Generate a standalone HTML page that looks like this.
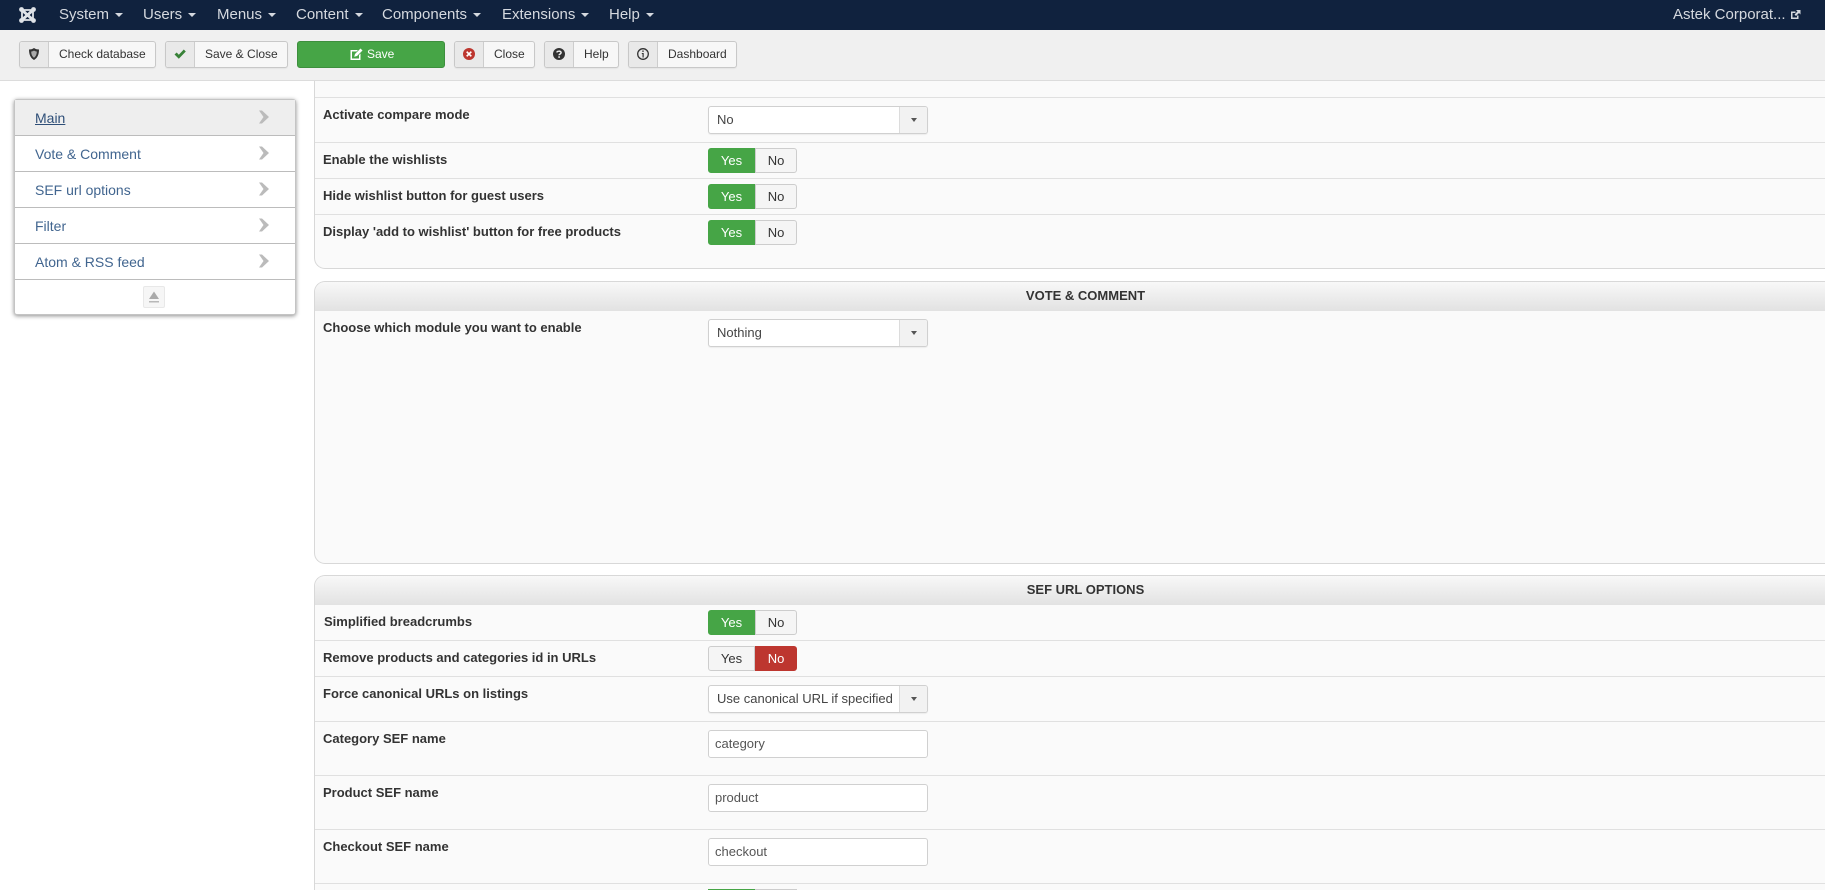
<!DOCTYPE html>
<html><head><meta charset="utf-8"><title>Options</title>
<style>
html,body{margin:0;padding:0;width:1825px;height:890px;overflow:hidden;background:#fff;font-family:"Liberation Sans",Arial,sans-serif;color:#333}
*{box-sizing:border-box}
#wrap{position:relative;width:1825px;height:890px;overflow:hidden;background:#fff}
.a{position:absolute}
#nav{left:0;top:0;width:1825px;height:30px;background:#10223e}
.m{position:absolute;top:5px;font-size:15px;line-height:20px;color:#d5d9df;white-space:nowrap}
.m i{display:inline-block;width:0;height:0;border-left:4px solid transparent;border-right:4px solid transparent;border-top:4px solid #d5d9df;margin-left:6px;vertical-align:2px}
#tb{left:0;top:30px;width:1825px;height:51px;background:#f0f0f0;border-bottom:1px solid #dcdcdc}
.b{position:absolute;top:41px;height:27px;background:#f7f7f7;border:1px solid #c8c8c8;border-radius:3px;font-size:12px;line-height:25px;color:#333;box-shadow:0 1px 1px rgba(0,0,0,.05)}
.b .ic{position:absolute;left:0;top:0;width:29px;height:25px;background:#e9e9e9;border-right:1px solid #cdcdcd;border-radius:2px 0 0 2px}
.b .ic svg{position:absolute;left:7px;top:5px}
.b span{position:absolute;left:39px;top:0;white-space:nowrap}
#sv{position:absolute;left:297px;top:41px;width:148px;height:27px;background:#46a546;border:1px solid #3d8f3d;border-radius:3px;color:#fff;font-size:12px;line-height:25px}
#side{left:14px;top:99px;width:282px;height:216px;background:#fff;border:1px solid #c4c4c4;border-radius:3px;box-shadow:0 1px 4px rgba(0,0,0,.45)}
.r{position:absolute;left:0;width:280px;height:36px;border-bottom:1px solid #bcbcbc;font-size:14px;line-height:37px;padding-left:20px;color:#41658f}
.r svg{position:absolute;left:243px;top:10px}
.box{position:absolute;left:314px;width:1511px;background:#fafafa;border:1px solid #d8d8d8;border-right:none;border-radius:11px 0 0 11px}
.hd{position:absolute;left:0;top:0;width:100%;height:29px;background:linear-gradient(#f8f8f8,#e2e2e2);border-radius:10px 0 0 0;text-align:center;font-size:13px;font-weight:bold;line-height:28px;color:#333;padding-left:31px}
.ln{position:absolute;left:315px;width:1510px;height:1px;background:#e0e0e0}
.l{position:absolute;left:323px;font-size:13px;font-weight:bold;line-height:18px;color:#333;white-space:nowrap}
.t{position:absolute;left:708px;width:89px;height:25px;font-size:13px;line-height:24px;text-align:center}
.t div{position:absolute;top:0;height:25px}
.t .y{left:0;width:47px;border-radius:3px 0 0 3px}
.t .n{left:47px;width:42px;border-radius:0 3px 3px 0}
.g{background:#46a546;color:#fff;border:1px solid #46a546}
.o{background:#f5f5f5;color:#333;border:1px solid #cdcdcd}
.d{background:#bd362f;color:#fff;border:1px solid #bd362f}
.s{position:absolute;left:708px;width:220px;height:28px;background:#fff;border:1px solid #d0d0d0;border-radius:3px;font-size:13px;line-height:25px;padding-left:8px;color:#444;white-space:nowrap;box-shadow:0 1px 1px rgba(0,0,0,.06)}
.s b{position:absolute;right:0;top:0;width:28px;height:26px;background:#f2f2f2;border-left:1px solid #dcdcdc;border-radius:0 2px 2px 0}
.s b:after{content:"";position:absolute;left:11px;top:11px;border-left:3px solid transparent;border-right:3px solid transparent;border-top:4px solid #555}
.i{position:absolute;left:708px;width:220px;height:28px;background:#fff;border:1px solid #d0d0d0;border-radius:3px;font-size:13px;line-height:25px;padding-left:6px;color:#555}
</style></head><body><div id="wrap">
<div class="a" id="nav"></div>
<svg class="a" style="left:18px;top:6px" width="19" height="18" viewBox="0 0 19 18"><g fill="none" stroke="#dfe3e8"><path d="M4 4 L15 14M15 4 L4 14" stroke-width="3"/><path d="M4 4 H15M4 14 H15M4 4 V14M15 4 V14" stroke-width="1.800"/></g><g fill="#10223e"><circle cx="9.500" cy="6" r=".9"/><circle cx="9.500" cy="12" r=".9"/><circle cx="6" cy="9" r=".9"/><circle cx="13" cy="9" r=".9"/></g><g fill="#dfe3e8"><circle cx="3.500" cy="3.500" r="2.400"/><circle cx="15.500" cy="3.500" r="2.400"/><circle cx="3.500" cy="14.500" r="2.400"/><circle cx="15.500" cy="14.500" r="2.400"/></g></svg>
<div class="m" style="left:59px">System<i></i></div>
<div class="m" style="left:143px">Users<i></i></div>
<div class="m" style="left:217px">Menus<i></i></div>
<div class="m" style="left:296px">Content<i></i></div>
<div class="m" style="left:382px">Components<i></i></div>
<div class="m" style="left:502px">Extensions<i></i></div>
<div class="m" style="left:609px">Help<i></i></div>
<div class="m" style="left:1673px">Astek Corporat...</div>
<svg class="a" style="left:1790px;top:9px" width="11" height="11" viewBox="0 0 11 11"><path d="M1 2.500H5.500V4H2.500V8.500H7V6.500H8.500V10H1Z" fill="#d5d9df"/><path d="M6 1H10.500V5.500L9 4L6 7L4.500 5.500L7.500 2.500Z" fill="#d5d9df"/></svg>
<div class="a" id="tb"></div>

<div class="b" style="left:19px;width:137px"><div class="ic"><svg width="14" height="14" viewBox="0 0 14 14"><path d="M7 1C5.300 2.200 3.500 2.500 2 2.500C2 7.500 3.500 11 7 13C10.500 11 12 7.500 12 2.500C10.500 2.500 8.700 2.200 7 1Z" fill="#333"/><path d="M7 3.500C6 4.200 5 4.500 4.200 4.500C4.300 7.500 5.200 9.500 7 10.700C8.800 9.500 9.700 7.500 9.800 4.500C9 4.500 8 4.200 7 3.500Z" fill="#aaa"/></svg></div><span>Check database</span></div>
<div class="b" style="left:165px;width:123px"><div class="ic"><svg width="14" height="14" viewBox="0 0 14 14"><path d="M1.500 7.500L3.700 5.500L5.800 7.700L10.800 2.500L12.800 4.500L5.800 11.800Z" fill="#378137"/></svg></div><span>Save &amp; Close</span></div>
<div id="sv"><svg class="a" style="left:52px;top:6px" width="13" height="13" viewBox="0 0 13 13"><path d="M0.500 2H8L6.500 3.500H2V10.500H9V7L10.500 5.500V12H0.500Z" fill="#fff"/><path d="M10.500 0.500L12.500 2.500L7 8L4.200 8.800L5 6Z" fill="#fff"/></svg><span class="a" style="left:69px;top:0">Save</span></div>
<div class="b" style="left:454px;width:81px"><div class="ic"><svg width="14" height="14" viewBox="0 0 14 14"><circle cx="7" cy="7" r="6" fill="#bd362f"/><path d="M4.700 4.700L9.300 9.300M9.300 4.700L4.700 9.300" stroke="#fff" stroke-width="1.700"/></svg></div><span>Close</span></div>
<div class="b" style="left:544px;width:75px"><div class="ic"><svg width="14" height="14" viewBox="0 0 14 14"><circle cx="7" cy="7" r="6" fill="#333"/><path d="M4.900 5.400C5 3.900 9.100 3.600 9.100 5.600C9.100 7 7.100 6.900 7.100 8.300" fill="none" stroke="#f0f0f0" stroke-width="1.500"/><rect x="6.300" y="9.300" width="1.600" height="1.500" fill="#f0f0f0"/></svg></div><span>Help</span></div>
<div class="b" style="left:628px;width:109px"><div class="ic"><svg width="14" height="14" viewBox="0 0 14 14"><circle cx="7" cy="7" r="5.300" fill="none" stroke="#333" stroke-width="1.300"/><path d="M5.800 6H7.700V10.500H6.500V7H5.800Z" fill="#333"/><rect x="6.300" y="3.500" width="1.400" height="1.400" fill="#333"/></svg></div><span>Dashboard</span></div>

<div class="a" id="side">
<div class="r" style="top:0;background:#eee;color:#2f4f78"><u>Main</u><svg width="12" height="14" viewBox="0 0 12 14"><path d="M1 0.500H4L11 7L4 13.500H1L5.500 7Z" fill="#bbb"/></svg></div>
<div class="r" style="top:36px">Vote &amp; Comment<svg width="12" height="14" viewBox="0 0 12 14"><path d="M1 0.500H4L11 7L4 13.500H1L5.500 7Z" fill="#bbb"/></svg></div>
<div class="r" style="top:72px">SEF url options<svg width="12" height="14" viewBox="0 0 12 14"><path d="M1 0.500H4L11 7L4 13.500H1L5.500 7Z" fill="#bbb"/></svg></div>
<div class="r" style="top:108px">Filter<svg width="12" height="14" viewBox="0 0 12 14"><path d="M1 0.500H4L11 7L4 13.500H1L5.500 7Z" fill="#bbb"/></svg></div>
<div class="r" style="top:144px">Atom &amp; RSS feed<svg width="12" height="14" viewBox="0 0 12 14"><path d="M1 0.500H4L11 7L4 13.500H1L5.500 7Z" fill="#bbb"/></svg></div>
<div class="a" style="left:128px;top:186px;width:22px;height:22px;background:#f6f6f6;border:1px solid #e8e8e8;border-radius:2px"><svg class="a" style="left:4px;top:4px" width="12" height="13" viewBox="0 0 12 13"><path d="M6 0.500L11 8H1Z" fill="#aaa"/><rect x="1" y="10" width="10" height="1.500" fill="#b8b8b8"/></svg></div>
</div>

<div class="box" style="top:81px;height:188px;border-top:none;border-radius:0 0 0 11px"></div>
<div class="ln" style="top:97px"></div>
<div class="ln" style="top:142px"></div>
<div class="ln" style="top:178px"></div>
<div class="ln" style="top:214px"></div>
<div class="l" style="top:106px">Activate compare mode</div>
<div class="s" style="top:106px">No<b></b></div>
<div class="l" style="top:151px">Enable the wishlists</div>
<div class="t" style="top:148px"><div class="y g">Yes</div><div class="n o">No</div></div>
<div class="l" style="top:187px">Hide wishlist button for guest users</div>
<div class="t" style="top:184px"><div class="y g">Yes</div><div class="n o">No</div></div>
<div class="l" style="top:223px">Display 'add to wishlist' button for free products</div>
<div class="t" style="top:220px"><div class="y g">Yes</div><div class="n o">No</div></div>

<div class="box" style="top:281px;height:283px"><div class="hd">VOTE &amp; COMMENT</div></div>
<div class="l" style="top:319px">Choose which module you want to enable</div>
<div class="s" style="top:319px">Nothing<b></b></div>

<div class="box" style="top:575px;height:315px;border-bottom:none;border-radius:11px 0 0 0"><div class="hd">SEF URL OPTIONS</div></div>
<div class="ln" style="top:640px"></div>
<div class="ln" style="top:676px"></div>
<div class="ln" style="top:721px"></div>
<div class="ln" style="top:775px"></div>
<div class="ln" style="top:829px"></div>
<div class="ln" style="top:883px"></div>
<div class="l" style="top:613px;left:324px">Simplified breadcrumbs</div>
<div class="t" style="top:610px"><div class="y g">Yes</div><div class="n o">No</div></div>
<div class="l" style="top:649px">Remove products and categories id in URLs</div>
<div class="t" style="top:646px"><div class="y o">Yes</div><div class="n d">No</div></div>
<div class="l" style="top:685px">Force canonical URLs on listings</div>
<div class="s" style="top:685px">Use canonical URL if specified<b></b></div>
<div class="l" style="top:730px">Category SEF name</div>
<div class="i" style="top:730px">category</div>
<div class="l" style="top:784px">Product SEF name</div>
<div class="i" style="top:784px">product</div>
<div class="l" style="top:838px">Checkout SEF name</div>
<div class="i" style="top:838px">checkout</div>
<div class="a" style="left:708px;top:889px;width:47px;height:1px;background:#46a546"></div>
<div class="a" style="left:755px;top:889px;width:42px;height:1px;background:#cdcdcd"></div>
</div></body></html>
